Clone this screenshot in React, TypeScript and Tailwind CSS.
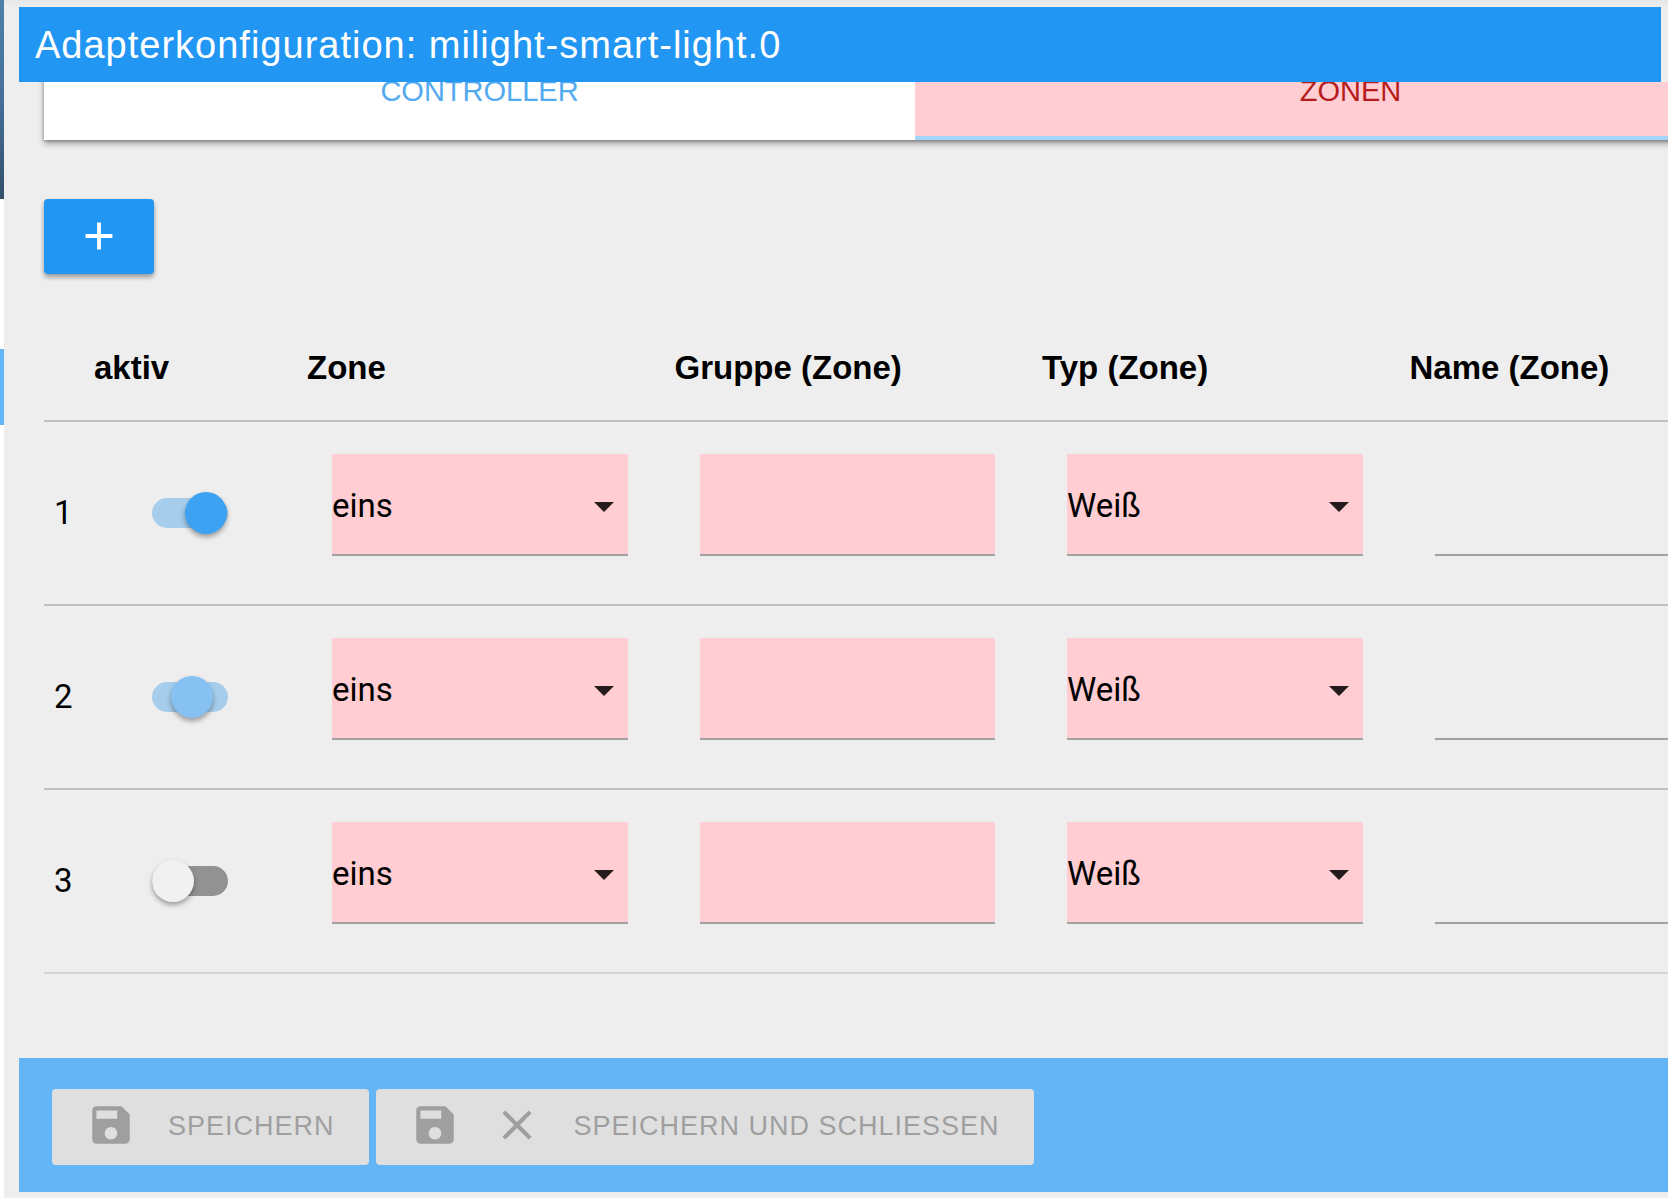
import { useState } from 'react';
import { MdAdd, MdArrowDropDown, MdClose, MdSave } from 'react-icons/md';
import clsx from 'clsx';

interface Zone {
  id: number;
  active: boolean;
  track: string;
  thumb: string;
}

const zones: Zone[] = [
  { id: 1, active: true, track: 'bg-[#a6cdec]', thumb: 'left-[33px] bg-[#3ea2f3]' },
  { id: 2, active: true, track: 'bg-[#a6cdec]', thumb: 'left-[19px] bg-[#87c1f1]' },
  { id: 3, active: false, track: 'bg-[#929292]', thumb: 'left-0 bg-[#f1f1f1]' },
];

const columns = ['Zone', 'Gruppe (Zone)', 'Typ (Zone)', 'Name (Zone)'];

const fieldClass =
  'block w-full h-[102px] appearance-none rounded-none border-b-2 border-[#a3a0a0] pt-[3px] font-[Roboto,sans-serif] text-[33px] outline-none';

function Switch({ zone }: { zone: Zone }) {
  const [on, setOn] = useState(zone.active);

  return (
    <label className="relative mx-auto flex h-[42px] w-[76px] cursor-pointer items-center">
      <input
        type="checkbox"
        className="sr-only"
        aria-label={`Zone ${zone.id} aktiv`}
        checked={on}
        onChange={(e) => setOn(e.target.checked)}
      />
      <span className={clsx('h-[30px] w-full rounded-full', zone.track)} />
      <span
        className={clsx(
          'absolute top-0 size-[42px] rounded-full shadow-[0_3px_5px_rgba(0,0,0,0.35)]',
          zone.thumb,
        )}
      />
    </label>
  );
}

function SelectField({ label, options }: { label: string; options: string[] }) {
  return (
    <div className="relative">
      <select aria-label={label} className={clsx(fieldClass, 'bg-[#ffcdd2] pr-12')}>
        {options.map((option) => (
          <option key={option}>{option}</option>
        ))}
      </select>
      <MdArrowDropDown className="pointer-events-none absolute top-7 right-0 size-12 text-[#221a1b]" />
    </div>
  );
}

function ZoneRow({ zone }: { zone: Zone }) {
  return (
    <tr className="h-[184px] border-b-2 border-[#c0c0c0] last:border-[#d5d5d5]">
      <td className="pl-[10px] font-[Roboto,sans-serif] text-[33px]">{zone.id}</td>
      <td className="pr-[2px]">
        <Switch zone={zone} />
      </td>
      <td className="pt-8 pr-[37px] pb-12 pl-[35px]">
        <SelectField label={`Zone ${zone.id}`} options={['eins', 'zwei', 'drei', 'vier']} />
      </td>
      <td className="pt-8 pr-[37px] pb-12 pl-[35px]">
        <input type="text" aria-label={`Gruppe ${zone.id}`} className={clsx(fieldClass, 'bg-[#ffcdd2]')} />
      </td>
      <td className="pt-8 pr-[37px] pb-12 pl-[35px]">
        <SelectField label={`Typ ${zone.id}`} options={['Weiß', 'RGBW', 'RGB+CCT']} />
      </td>
      <td className="pt-8 pr-[37px] pb-12 pl-[35px]">
        <input type="text" aria-label={`Name ${zone.id}`} className={clsx(fieldClass, 'bg-transparent')} />
      </td>
      <td />
    </tr>
  );
}

const footerButtonClass =
  'flex h-[76px] items-center gap-8 rounded-[4px] bg-[#dfdfdf] px-[34px] pb-[1px] text-[27px] tracking-[1px] text-[#9f9f9f] whitespace-nowrap';

export default function App() {
  return (
    <div className="flex h-screen overflow-hidden bg-white font-['Liberation_Sans',Arial,sans-serif] text-black">
      {/* Page behind the dialog */}
      <aside className="flex w-1 shrink-0 flex-col">
        <div className="h-[199px] bg-linear-to-b from-[#4f80a6] via-[#45709a] to-[#334f69]" />
        <div className="mt-[150px] h-[76px] bg-[#64b5f6]" />
      </aside>

      <div className="flex min-w-0 flex-1 flex-col bg-[#eeeeee] pb-[6px] pl-[15px]">
        <div className="-ml-[15px] h-[7px] shrink-0 bg-linear-to-b from-[#e7e7e7] to-[#eeeeee]" />
        <header className="mr-[7px] flex h-[75px] shrink-0 items-center bg-[#2196f3] px-4 pt-[2px]">
          <h1 className="text-[38px] tracking-[1px] text-white">
            Adapterkonfiguration: milight-smart-light.0
          </h1>
        </header>

        {/* Scrolled content, wider than the dialog */}
        <main className="flex-1 overflow-hidden pl-[25px]">
          <nav className="-mt-[42px] flex h-[100px] w-[calc(100%+118px)] bg-white text-[29px] shadow-[0_4px_6px_rgba(0,0,0,0.3),0_1px_3px_rgba(0,0,0,0.3)]">
            <a
              href="#controller"
              className="flex flex-1 items-center justify-center pt-[3px] text-[#54aaf0]"
            >
              CONTROLLER
            </a>
            <a
              href="#zonen"
              className="flex flex-1 items-center justify-center border-b-4 border-[#a6d5fa] bg-[#ffcdd2] pt-[7px] text-[#b71c1c]"
            >
              ZONEN
            </a>
          </nav>

          <button
            type="button"
            aria-label="Zone hinzufügen"
            className="mt-[59px] flex h-[75px] w-[110px] items-center justify-center rounded-[4px] bg-[#2196f3] pb-[2px] text-white shadow-[0_4px_5px_rgba(0,0,0,0.2),0_2px_4px_rgba(0,0,0,0.2)]"
          >
            <MdAdd className="size-[46px]" />
          </button>

          <table className="mt-10 w-[calc(100%+118px)] table-fixed border-collapse">
            <colgroup>
              <col className="w-[40px]" />
              <col className="w-[213px]" />
              <col />
              <col />
              <col />
              <col />
              <col className="w-[19px]" />
            </colgroup>
            <thead>
              <tr className="h-[107px] border-b-2 border-[#c0c0c0] text-left text-[33px]">
                <td />
                <th className="pt-[2px] pl-[10px]">aktiv</th>
                {columns.map((column) => (
                  <th key={column} className="pt-[2px] pl-[10px]">
                    {column}
                  </th>
                ))}
                <td />
              </tr>
            </thead>
            <tbody>
              {zones.map((zone) => (
                <ZoneRow key={zone.id} zone={zone} />
              ))}
            </tbody>
          </table>
        </main>

        <footer className="flex shrink-0 gap-[7px] bg-[#64b5f6] px-[33px] pt-[31px] pb-[27px]">
          <button type="button" disabled className={footerButtonClass}>
            <MdSave className="mb-1 size-[50px]" />
            SPEICHERN
          </button>
          <button type="button" disabled className={footerButtonClass}>
            <MdSave className="mb-1 size-[50px]" />
            <MdClose className="mb-1 size-[50px]" />
            SPEICHERN UND SCHLIESSEN
          </button>
        </footer>
      </div>
    </div>
  );
}
